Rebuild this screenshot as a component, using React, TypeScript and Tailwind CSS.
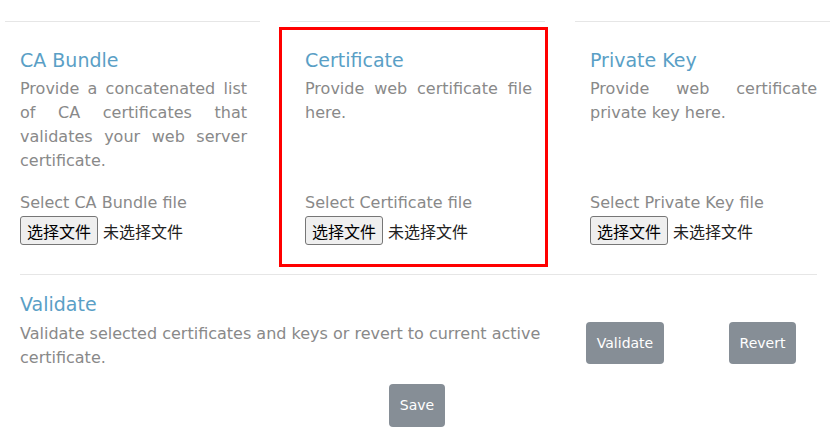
const columns = [
  {
    title: 'CA Bundle',
    text: 'Provide a concatenated list of CA certificates that validates your web server certificate.',
    label: 'Select CA Bundle file',
  },
  {
    title: 'Certificate',
    text: 'Provide web certificate file here.',
    label: 'Select Certificate file',
    highlight: true,
  },
  {
    title: 'Private Key',
    text: 'Provide web certificate private key here.',
    label: 'Select Private Key file',
  },
];

function FilePicker() {
  return (
    <div className="flex items-center mt-[1px] font-['Noto_Sans_CJK_SC',sans-serif] text-[16px] text-[#222]">
      <button className="h-[29px] px-[6px] bg-[#efefef] border border-[#767676] rounded-[3px] text-black leading-none">
        选择文件
      </button>
      <span className="ml-[5px]">未选择文件</span>
    </div>
  );
}

export default function App() {
  return (
    <div className="w-[834px] h-[448px] bg-white font-['DejaVu_Sans',sans-serif] overflow-hidden">
      <div className="flex pl-[5px] pt-[21px] gap-[30px]">
        {columns.map((col) => (
          <div
            key={col.title}
            className="relative w-[255px] border-t border-[#e6e6e6] pl-[15px] pr-[13px] pt-[27px] pb-[29px]"
          >
            {col.highlight && (
              <div className="absolute left-[-11px] top-[5px] w-[269px] h-[240px] border-[3px] border-[#ff0000] pointer-events-none" />
            )}
            <h2 className="text-[19px] leading-[23px] text-[#5a9fc6]">{col.title}</h2>
            <p className="mt-[5px] h-[96px] text-[16px] leading-6 text-[#898989] text-justify">{col.text}</p>
            <div className="mt-[18px] text-[16px] leading-6 text-[#898989]">{col.label}</div>
            <FilePicker />
          </div>
        ))}
      </div>

      <div className="ml-[20px] w-[797px] border-t border-[#e6e6e6]" />

      <div className="flex items-start px-[20px] pt-[18px]">
        <div className="w-[530px]">
          <h2 className="text-[19px] leading-[23px] text-[#5a9fc6]">Validate</h2>
          <p className="mt-[6px] text-[16px] leading-6 text-[#898989]">
            Validate selected certificates and keys or revert to current active certificate.
          </p>
        </div>
        <button className="ml-[36px] mt-[29px] w-[78px] h-[42px] rounded-[4px] bg-[#868e96] text-white text-[14px]">
          Validate
        </button>
        <button className="ml-[65px] mt-[29px] w-[67px] h-[42px] rounded-[4px] bg-[#868e96] text-white text-[14px]">
          Revert
        </button>
      </div>

      <div className="flex justify-center mt-[14px]">
        <button className="w-[56px] h-[43px] rounded-[4px] bg-[#868e96] text-white text-[14px]">Save</button>
      </div>
    </div>
  );
}
